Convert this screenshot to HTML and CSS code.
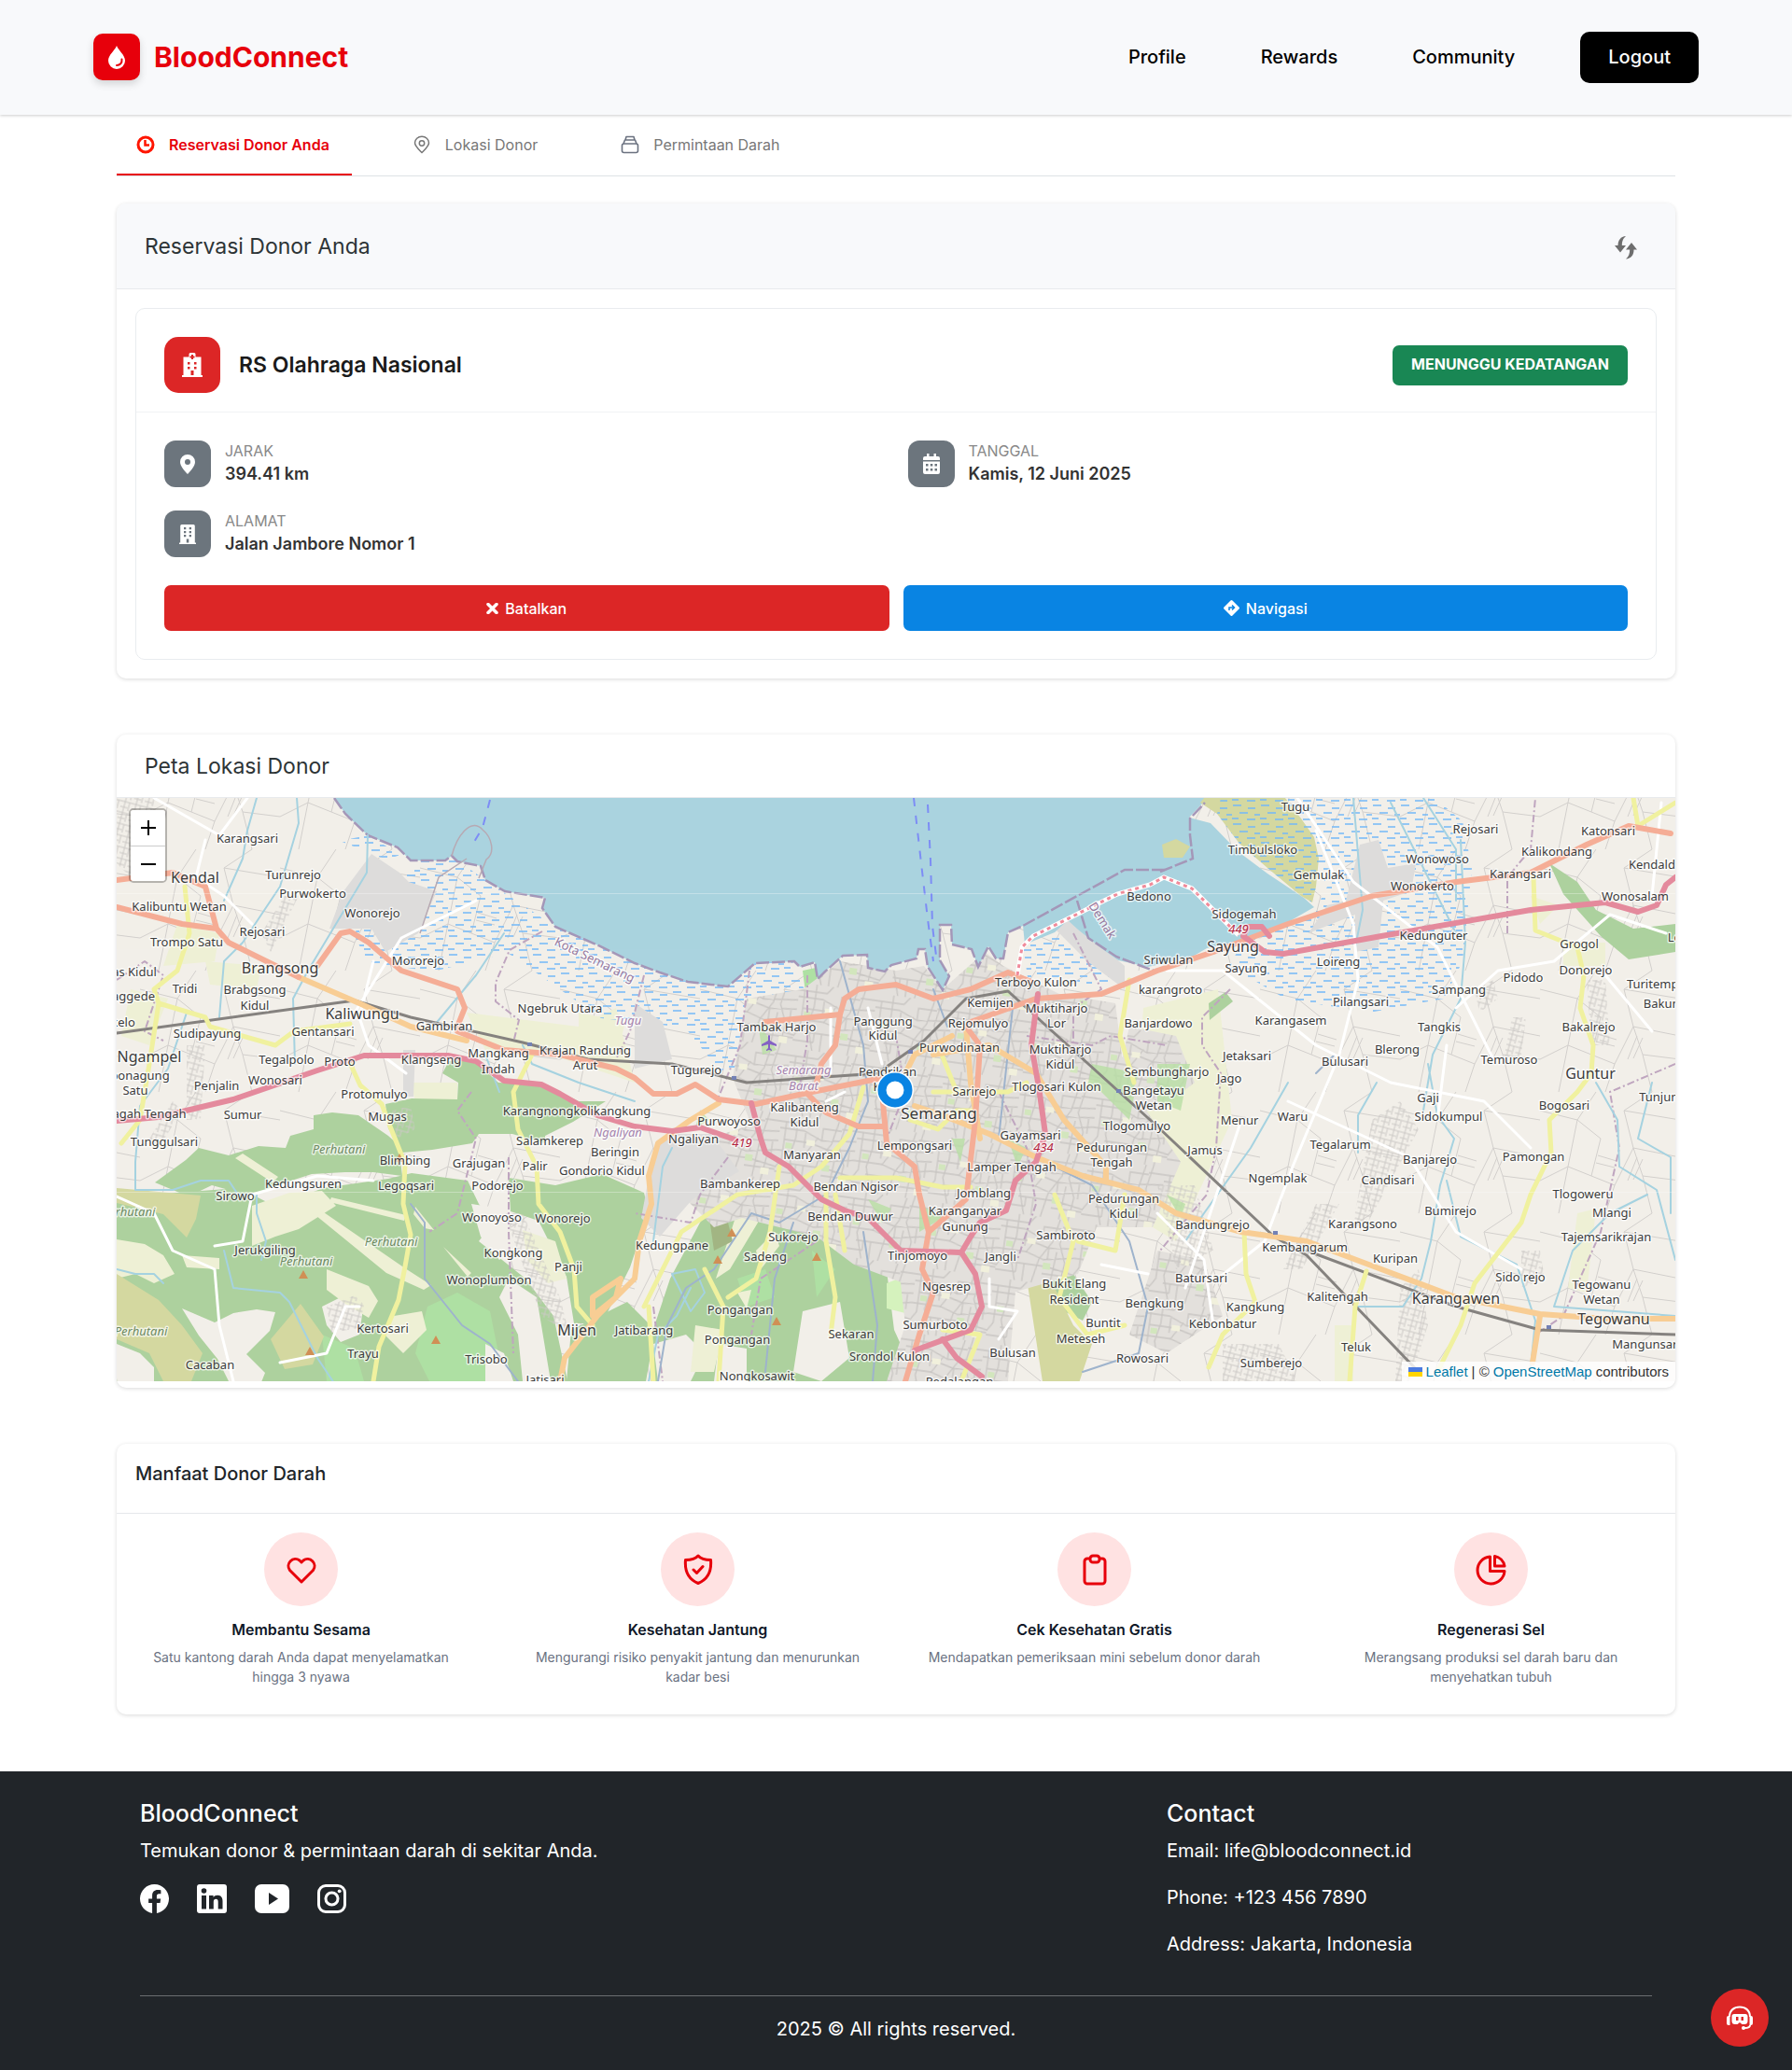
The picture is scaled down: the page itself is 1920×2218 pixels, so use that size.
FILE: index.html
```html
<!DOCTYPE html>
<html lang="id">
<head>
<meta charset="utf-8">
<meta name="viewport" content="width=device-width, initial-scale=1">
<title>BloodConnect</title>
<link rel="stylesheet" href="styles.css">
</head>
<body>
<header class="site-header">
  <a class="brand" href="#">
    <span class="brand-mark"><svg width="20" height="26" viewBox="0 0 20 26"><path fill="#fff" d="M10 1C8 6 1 11 1 17a9 9 0 0 0 18 0C19 11 12 6 10 1z"/><path d="M15.500 15.500c.5 4-2 6.500-5.500 6.500" fill="none" stroke="#e7000b" stroke-width="2" stroke-linecap="round"/></svg></span>
    <span class="brand-name">BloodConnect</span>
  </a>
  <nav class="main-nav">
    <a href="#">Profile</a>
    <a href="#">Rewards</a>
    <a href="#">Community</a>
    <button class="logout" type="button">Logout</button>
  </nav>
</header>

<main class="page">
  <nav class="tabs">
    <a class="tab active" href="#"><svg width="20" height="20" viewBox="0 0 20 20" fill="none" stroke="#ff1500" stroke-width="3"><circle cx="10" cy="10" r="8"/><path stroke-width="2.500" d="M9.500 5v5.500H14"/></svg>Reservasi Donor Anda</a>
    <a class="tab" href="#"><svg width="20" height="20" viewBox="0 0 20 20" fill="none" stroke="#777" stroke-width="1.500"><path d="M10 18.500C6 14.500 2.500 11.500 2.500 8a7.500 6.800 0 0 1 15 0c0 3.500-3.500 6.500-7.500 10.500z"/><circle cx="10" cy="8.500" r="2.700"/></svg>Lokasi Donor</a>
    <a class="tab" href="#"><svg width="20" height="20" viewBox="0 0 20 20" fill="none" stroke="#6b7280" stroke-width="1.600" stroke-linejoin="round"><rect x="1.500" y="9" width="17" height="9.500" rx="2"/><path d="M3 9l1.500-4h11L17 9M5 5l1-3.500h8L15 5"/></svg>Permintaan Darah</a>
  </nav>

  <section class="card">
    <div class="card-head tinted">
      <h2 class="card-title">Reservasi Donor Anda</h2>
      <button class="icon-button" type="button" aria-label="Muat ulang"><svg width="26" height="26" viewBox="0 0 26 26" fill="#6e6e6e"><path d="M13 1C7.500 1.500 4.500 5 4.500 11H1l6 7.500 6-7.500H8.800C8.800 6.500 10 3.500 13 1z"/><path d="M13 25.500c5.500-.5 8.500-4 8.500-10H25L19 8l-6 7.500h4.200c0 4.500-1.200 7.500-4.200 10z"/></svg></button>
    </div>
    <div class="card-body">
      <article class="booking">
        <div class="booking-head">
          <span class="place-icon"><svg width="22" height="26" viewBox="0 0 22 26"><path fill="#fff" d="M0 24h1.500V4.500h6V1.500Q7.500 0 9 0h4q1.500 0 1.500 1.500v3h6V24H22v2H0z"/><g fill="#dc2626"><rect x="10" y="2" width="2" height="5"/><rect x="8.500" y="3.500" width="5" height="2"/><rect x="6" y="10" width="2.500" height="2.500"/><rect x="13" y="10" width="2.500" height="2.500"/><rect x="6" y="15" width="2.500" height="2.500"/><rect x="13" y="15" width="2.500" height="2.500"/><rect x="9.500" y="19" width="3" height="5"/></g></svg></span>
          <h3 class="place-name">RS Olahraga Nasional</h3>
          <span class="status">MENUNGGU KEDATANGAN</span>
        </div>
        <div class="booking-body">
          <dl class="facts">
            <div class="fact">
              <span class="fact-icon"><svg width="16" height="21" viewBox="0 0 16 21"><path fill="#fff" fill-rule="evenodd" d="M8 0a8 8 0 0 1 8 8c0 4.500-5 10-8 13C5 18 0 12.500 0 8a8 8 0 0 1 8-8zm0 5a3 3 0 1 0 0 6 3 3 0 0 0 0-6z"/></svg></span>
              <div><dt>JARAK</dt><dd>394.41 km</dd></div>
            </div>
            <div class="fact">
              <span class="fact-icon"><svg width="20" height="22" viewBox="0 0 20 22"><path fill="#fff" d="M1 7V5q0-2 2-2h2V0h2.500v3h5V0H15v3h2q2 0 2 2v2zM1 8.500h18V20q0 2-2 2H3q-2 0-2-2z"/><g fill="#6c757d"><path d="M4 11h2.500v2.500H4zM8.800 11h2.500v2.500H8.800zM13.500 11H16v2.500h-2.500zM4 16h2.500v2.500H4zM8.800 16h2.500v2.500H8.800zM13.500 16H16v2.500h-2.500z"/></g></svg></span>
              <div><dt>TANGGAL</dt><dd>Kamis, 12 Juni 2025</dd></div>
            </div>
            <div class="fact">
              <span class="fact-icon"><svg width="18" height="21" viewBox="0 0 18 21"><path fill="#fff" d="M0 19.500h1.200V1.500Q1.200 0 2.700 0h12.600q1.500 0 1.500 1.500v18H18V21H0z"/><path fill="#6c757d" d="M5 3h2.300v2.300H5zM10.700 3H13v2.300h-2.300zM5 7h2.300v2.300H5zM10.700 7H13v2.300h-2.300zM5 11h2.300v2.300H5zM10.700 11H13v2.300h-2.300zM7.800 15.500h2.500v4H7.800z"/></svg></span>
              <div><dt>ALAMAT</dt><dd>Jalan Jambore Nomor 1</dd></div>
            </div>
          </dl>
          <div class="actions">
            <button class="action cancel" type="button"><svg width="13" height="12" viewBox="0 0 13 12"><path d="M2 1.500l9 9M11 1.500l-9 9" stroke="#fff" stroke-width="3.500" stroke-linecap="round"/></svg>Batalkan</button>
            <button class="action navigate" type="button"><svg width="17" height="17" viewBox="0 0 17 17"><path fill="#fff" d="M7.500.5q1-1 2 0l7 7q1 1 0 2l-7 7q-1 1-2 0l-7-7q-1-1 0-2z"/><path d="M6 11V8h5M9 5.500L11.500 8 9 10.500" fill="none" stroke="#0984e3" stroke-width="1.500"/></svg>Navigasi</button>
          </div>
        </div>
      </article>
    </div>
  </section>

  <section class="card map-card">
    <div class="card-head slim"><h2 class="card-title">Peta Lokasi Donor</h2></div>
    <div class="map">
      <svg class="map-canvas" viewBox="125 855 1670 625" preserveAspectRatio="xMidYMid slice" role="img" aria-label="Peta Semarang">
        <defs>
          <pattern id="marsh" width="30" height="20" patternUnits="userSpaceOnUse"><path d="M1 3h9M17 6h8M8 11h9M24 13h6M0 17h7M16 18h9" stroke="#74b9f7" stroke-width="1.500"/></pattern>
          <pattern id="lanes" width="150" height="130" patternUnits="userSpaceOnUse"><path d="M0 20L40 30 60 0M40 30L30 80 0 95M30 80L80 100 70 130M80 100L100 60 150 70M100 60L90 20 120 0M90 20L150 30M55 90L65 50 40 30M0 20M150 95L110 90 100 60M30 80L20 130M110 90L120 130M62 68l20 6M60 76l20 5M104 70l-10 25M110 72l-10 22" fill="none" stroke="#d2cfcc" stroke-width="1"/></pattern>
          <pattern id="blocks" width="83" height="71" patternUnits="userSpaceOnUse" patternTransform="rotate(8)"><rect width="83" height="71" fill="#e3e0dc"/><path d="M0 8h30l6-8M0 15h26l20 8 37-4M18 0v24l-4 20 8 27M6 8v40l-6 10M28 15v18M30 40l12-20M6 27h28l20 5 29-3M0 39h30l20 6 33-6M14 52h40l29 5M0 62h22M40 71l5-26 12-20 5-25M60 71l3-36M70 0l-5 26 8 20-3 25M46 23v-13h20M30 52v19M50 60h33M54 32v12M77 29v18M22 52v10M66 8h17" fill="none" stroke="#c9c6c3" stroke-width="1.300"/><path d="M50 48h8v7h-8zM8 30h7v6H8z" fill="#d2e6bd"/><path d="M30 24h9v6h-9zM68 60h9v7h-9z" fill="#f1f0dc"/></pattern>
          <pattern id="village" width="12" height="12" patternUnits="userSpaceOnUse" patternTransform="rotate(15)"><path d="M0 3h12M4 0v12M0 9h8M9 3v9" fill="none" stroke="#cbc8c5" stroke-width="1"/></pattern>
        </defs>
        <rect x="125" y="855" width="1670" height="625" fill="#f2efe9"/>
        <rect x="125" y="855" width="1670" height="625" fill="url(#lanes)"/>

        <g class="farmland">
          <path d="M190 990l45 10-5 30-55 5zM220 1030l60 5-5 25-50-5zM140 1060l40 10-20 50-30-10zM440 1160h50v20h-45zM500 1085l120 15 40-20 20 80-90-30-70-5zM620 1085l50 10-10 40-40-5zM1225 1080l80-20 15 140-60 130-50-30zM1640 960l30 10-20 20zM1675 1010h45v25h-45zM1430 1420h20v60h-20zM1690 1300l20-5-10 90-20-5z"/>
        </g>
        <g class="forest">
          <path d="M166 1267l33-24 14-13 32 8 32-10 29 2 5-13 25-7v-15l20-3 28 3 32 22 11 10 4 33-31-4-30 0-36 2-28 9-29 11-21 0-29-8-25 12z"/>
          <path d="M413 1183l28-6 49 1 1-18-17-10 7-13 25-2 28 25 50 2 36 18 29 0-35 22-30 15v8l-35-10-36 0-7 10-43 7-32 3-15-26z"/>
          <path d="M125 1283l77-6 54-4 40 20 50-20 70-10 25-6 60 8 12 25 15 20-15 20 50 40 30 40 15 70H125z"/>
          <path d="M545 1262l50 8 50-12 45 20 5 20-20 60-30 60-30 0-8-50-30-60-30-10z"/>
          <path d="M612 1425l60-30 30 30-10 55h-85z"/>
          <path d="M698 1430l20-60 40-75 30-15 20 5 20-10 40 30 60 10 20 30 10 80 25 55H700z"/>
          <path d="M1110 1270l40-10-10 40-50 20-10-20zM1090 1370l30-25 30 20 20 30-10 20-40-20zM1295 1075l18-12 8 10-25 20zM1660 925l30 20 20 30 40 20 45-5v30l-50 8-30-25-40-45z"/>
        </g>
        <g fill="#aee0a3"><path d="M458 1400l32-15 35 20 15 75h-80l-15-30zM345 1430l35 15 10 35h-40zM860 1040l14-3 5 30-15 5z"/><path d="M950 1375l25-10 15 20-20 22-20-5z" fill="#d5f2bd"/><path d="M790 1370l30-10 10 30-30 10zM870 1340l25 20-20 30z"/></g>
        <g class="open">
          <path d="M195 1402l35 15 20-10 25-4 20 3-6 20-25 25 20 20-6 15h-30l-15-30-20-25zM125 1440l25 10 15 15v15h-40zM345 1400l30-15 15 10-5 35-20 8-15-18zM545 1370l30 20 10 60 5 30h-30l-5-50-20-40zM505 1290l35 5 15 40-20 15-20-25zM520 1440l20 10 10 30h-30zM860 1405l40-10 10 60-30 25-30-10zM700 1440l35-10 20 20-15 30h-35zM770 1440l30 5 0 35h-35z"/>
        </g>
        <g class="clearing">
          <path d="M125 1328l30 5 20 12 12 20-22 10-20-10-20 5zM270 1292l40-14 35-2 15 16-40 25-25 8-25 10zM195 1345l40 3v12l-35-2zM350 1360l25 10 20 8 10 16-10 18-25-15-20-15zM422 1410l30-5 5 20-25 25-20-20zM252 1241l8-5 38 25-6 6zM338 1302l6-5 90 62 28 18-8 5-40-18zM355 1283l80 19-2 6-80-20zM445 1293l20 25-10-2-12-15zM560 1318l35 12 12 40-20 5-22-25zM475 1336l30 28-4 4zM790 1298l22-10 0 22-30 50-15 10zM745 1420l30 5-10 45h-25zM790 1385l15-3-5 20zM810 1340l20-20 5 15-20 25z"/>
        </g>
        <g class="scrub"><path d="M125 1365l45 28 25 27 22 30-12 30h-30l-15-30-35-15zM290 1435l32-38 25 35-12 30-30 5zM125 1273l90 8-5 25-10 20-25-25-50-12zM1100 1370l20-10 30 60 20 20-20 60h-30z"/><path d="M760 1305l20 5 5 20-20 10z" fill="#a2b583"/></g>

        <g class="marsh">
          <path d="M394 895l46 27 50 0 30 21 75 50 85 37 60 22 40 4 29-25 40 0 35 80 20 50-60 10-70-20-40-50-90-10-100-70-80 20-70-10-15-30 20-30 75-70-60 20-50-20z"/>
          <path d="M1096 1012l35-12 20 10 50 25-10 22-90-10zM1377 855h160l30 25 10 50-10 100-20 40-80 15-90-15-60-35 20-35 70-20 15-30z"/>
        </g>
        <g class="urban">
          <path d="M800 1070l60-10 40-30 60 10 30-5 20 25 45-40 20 15 60 30 60 10 10 80 60 90-30 70-60 0-20 50-70 20-60 60-30-60-80-30-40-30-80-20-30 10-60-60 40-30 60-20-20-50z"/>
          <path d="M960 1330l80-20 50 50-10 120h-130l20-60zM1210 1100l50 10 20 50-40 30-50 0zM1240 1340l50 10 20 60-60 40-40-20z"/>
        </g>
        <g class="hamlets"><path d="M125 855h40l10 70-30 20-20-20zM420 1190l20-5 5 25-20 10zM1240 1270l40 0 20 70-40 20zM1470 1200l30-20 20 30-60 110-10-10zM1580 1060l20-10 5 20-20 15zM1700 1050l20 0 5 70-20 0zM1410 1290l25 0-40 70-20 0zM1500 1380l20-20 10 60-20 60-15 0zM1630 1340l20 0 5 30-25 10zM160 1220l25-40 10 10-25 40zM200 1120l20 0-5 80-15 0zM1310 1440l60 0 20 40h-80zM1620 1090l15 0-5 40-20 10zM280 1000l25-40 15 0-30 60zM350 1400l30-12 10 10-5 25-30 5zM540 1300l20 0 40 90 10 40-30-20z"/></g>
        <g fill="#dddcdb"><path d="M398 915l30 20 10 10 30 10-20 45-35 20-15-25-45 0 15-40zM702 1225l20-10 40 0 30 40-50 30-35 40-20-20zM1457 905l20-5 10 30 30-5-5 30-30 10-5 50-25 5 0-40-50 20 20-30 20-5zM432 1125h13l-2 50h-11zM680 1075l30 20 10 40-40 10zM1130 995l15-10 60 50 0 25-40-30z"/></g>
        <g fill="#b8dfa4" opacity=".8"><path d="M812 1095l20 30-15 5zM985 1290l25 15-25 15zM1080 1220l20 10-10 20zM1170 1140l50 10-10 30-45-15zM1180 1170l35 5-5 25zM1240 1140l35 0-10 50-25-10zM930 1285l25 10-10 15zM1250 1280l20 10-5 15zM750 1190l10 10-15 8zM1020 1220l14 0-5 25z"/></g>

        <path class="sea" d="M358 855l12 17 24 23 32 13 14 14h37l7-5 6 6 25 5 5 15 21 12 43 7-3 11 14 20 46 20 39 19 27 10 30 10 43 5 29-25 42-2 6 6 16-5 3 18 8-8 19-17 26-1 1 14 18 4 7-7 27-7 2-10h7l3 19 16 25 7-15-10-17v-38h12l1 21 21 5 7 19 11-22 8 13h8l5-28 16-7 2 20 32-13 14-13 11 10 25 20 18 13 32 7 46-10 17-10 33-7 35-10 47-27-11-10-39-26-32-24-29-30-23-6 16-17 2-5z"/>
        <g fill="#d4d8a0"><path d="M1308 855h69l17 22 14 20 5 23-3 30-4 17-12-7-36-30-30-26-24-32-18-12 10-12zM1245 905l15-6 15 8-8 12-20 0z"/></g>
        <path class="marsh" d="M1308 855h69l17 22 14 20 5 23-3 30-4 17-12-7-36-30-30-26-24-32z"/>
        <g fill="none" stroke="#a497b8" stroke-width="2.500" stroke-dasharray="14 3"><path d="M358 855l12 17 24 23 32 13 14 14h37l7-5 6 6 25 5 5 15 21 12 43 7-3 11 14 20 46 20 39 19 27 10 30 10 43 5 29-25 42-2 6 6 16-5 3 18 8-8 19-17 26-1 1 14 18 4 7-7 27-7 2-10h7l3 19 16 25 7-15-10-17v-38h12l1 21 21 5 7 19 11-22 8 13h8l5-28 16-7 109-60h45"/><path d="M1154 965l12 40 30 20 40 15M1243 934l35-14-3-25 0-18 16-17"/></g>
        <g fill="none" stroke="#b7a9b3" stroke-width="1.500"><path d="M484 917c5-20 20-42 33-28M517 889c10 8 14 25 4 32l-8 20M450 1000l20-60 30-20"/></g>
        <g class="ferry"><path d="M979 855l8 70 7 60 6 45M994 862l3 60 2 70 5 40M525 857l-8 30-12 20"/></g>

        <g class="border-line"><path d="M581 998l-35 20-15 35 0 20 25 20-5 20M690 1045l-15 60-15 30M803 1040l-10 80-25 60M865 1045v70l-10 60M1615 1000l0-60 25-30 5-55M1318 1060l-30 30 0 30 20 30-5 80-10 50-50 60M1795 1140l-70 30 10 60-20 90-40 90-30 20M505 1170l-15 20 20 30-10 40-10 40-30 20M545 1240v80l5 130M780 1240l-30 40-10 30-60-10M1100 1110l70 10 20-10 60 10M1150 1000l30 60-30 20 0 50M960 1110l10 60-20 50M1070 1170l30 60 10 60-20 60M700 1400l10 80M875 1330l-60 40-10 60M125 1050l30-20 20 15-20 60 20 10"/></g>

        <g class="river">
          <path d="M275 855l-10 35-5 30-20 45M318 855l2 27-20 68-40 60-20 20-5 60M394 895l-1 40-63 105-16 30 2 70M540 1000l-30 45-50 60M1450 855l10 120-8 40M1490 860l40 80 30 60M1525 855l35 55 0 55M1380 1160l-40 70-50 70-20 30M1475 1160l-20 35v40M1530 1140l10 55 18 25-15 50-10 60-10 40-20 30-50 0M1710 1160l23 40 2 50 40 25 20 75M1770 1160l-15 60 35 20v60M1550 1265l15 60 60 30 20 60-5 50M1795 1410l-130-10 20-60 40-40 40-20M1565 900l5 110-5 60-30 60-10 60"/>
          <path d="M125 1360l20 5 20 0 10 10M145 1275l40 0 30-10 30 0 10 15 20 0 0 20 10 30-5 20M240 1340l10 40 50 5 10 10 30 60 20 30M520 1130l15 40M200 1085l-20 60-30 40-5 60 0 30M560 1120l10 20 50 20 60 20M720 1230l-10 20-10 80M740 1380l-15 30-20 20-10 50M720 1365l25-5 10 25-15 20z"/>
        </g>
        <g class="canal"><path d="M900 1030l25 90 5 60-20 50-25 50-50 30-30-10-20 30-20 30-30 20-20 40-10 60M1085 1080l-15 140 40 20 60 30 40 60 20 70-10 50-60 20M850 1310l-20 60-10 100M925 1320l15 100-5 60M440 1290l15 20 0 60 40 50 30 20 30 40M1430 1130l-20 20M1000 1060l15 40"/></g>

        <g class="lane-white"><path d="M165 855l70 40 30-40M220 900l-10 40 30 20 30 30M400 1030l-15 60 10 30 40 30M510 965l-80 40-50 80M125 1282l40 18 20 40 45 20 5 60 15 60M230 1335l30-5 10-50 70-20 60 5M1390 855l60 90 90 70 60 120M1250 1040l60 0 100 80 80 40 100 20 50 50M1410 890l40 100 5 60-20 80-50 120-30 80-50 40M1380 1180l130 60 50 80 70 40M1550 1120l-10 80M1330 1200l-60 180M1560 1080l45-40 60-10 60-50 60 20M1720 1045l50 60M1240 1300l50 50 10 70M1780 860l-10 100M890 1080v70M930 1080l15 60M905 1170l-20 10M1180 1355l50 10M1060 1370v30l30 5-20 30M300 1460l50-10 20-50 15 0"/></g>
        <g class="rail"><path d="M125 1107l255-35 60 18 120 27 70 18 90 5 80 20 140-10 50-35 45-45 45-8 160 145 125 118 35 20 120 125M1400 1340l160 60 90 25 145 5"/></g>

        <g class="yellow"><path d="M198 950l5 50-13 40-25 20 5 15 50 15 5 10 70 20 20-15 60-8M170 1075l-10 65-10 60-20 25M374 1137l12 26 23 20 9 24 16 40-2 43 8 33-6 34-7 36-21 50-6 37M570 1130l-20 40 5 40 20 40 2 40 23 30 15 40 3 40 17 20M1643 940l2 57 45 18 7 30-4 35 14 40-2 30-15 20-30 30 2 35-22 45-10 30-50 65-15 45-25 50M1333 1320l2 45 10 30-35 35-15 35M1464 1362l-12 38-6 80M1795 860l-40 25-5-30M690 1400l40-80 60-40 60-10 30-20 30-35 15-50M885 1270v60l10 60-5 40M780 1390l30-20 15-50 10-70M1000 1170h80l20-10M975 1200l30 10 20-20 20 0M900 1262h60l50 10h30M1130 1280l20 50-15 60 30 40 40-10M1155 1330l40 10 10-60M1215 1160l-15-50 10-60M1005 1120l20 50M905 1340l-10-60M700 1480l-5-80M1010 1425l40 5-20 50M770 1480l5-80-20-40"/></g>
        <g class="orange"><path d="M320 1047l65 28 55 25 60 15M980 1185l30 10 50 20 50 25 50 20 60 15 40 25 70 20 70 10 80 30 80 30 90 18 70 5h75M1650 1410l-8 50M1000 1130l60-10 50 30 30 50 45 50 0 15M770 1182l-30 18-35 25-10 35 3 30-13 40-5 40-40 40-35 45-5 25M1035 1100l5 60 10 60M960 1170l20-40 40-20M660 1390l-25 20 0-20 30-20z"/></g>
        <g class="trunk"><path d="M125 943l60-8 35 15 12 45 13 15 75 37M125 972l70 18 37 5M340 1035l25-35 10-2 20 12 35 30 60 20 8 20-8 20M490 1105l50 20 60 5 60 15 20 10 20 17h25l20-10 25 16 40 5 60-13 75-15M820 1095l80-8 5-17 15-10 40-5 40 15 40-10 40-18 25 10M900 1087l-5 33-15 20-5 20M1040 1095l70-25 70-5 60-25 60-20 80-30 90-30 90-15 80-10 60-30 45-20 45 8M945 1170l5 55 30 25 5 30 10 40-7 40 12 25-15 45-15 50M995 1320l40-35 10-85 5-80-15-20M865 1172l20 20 35 15 25 0"/></g>
        <g class="toll"><path d="M125 1201l45-4 80-19 90-31 50-16h90l30 6 30 21 40 4 20 10 40 23 40 12 40 5 30-4 40 14M805 1182l10 38 5 15 25 15 35 35 25 12 25 8 35 35 65 2 10-17 10-15 28-13 10-32 22-20 10-30-7-50-8-45 7-55M1030 1342l15 23 7 35-12 25-60 22M1010 1435l15 20 27 20M1360 1003l-8-10h-15l-5 10 23 17 20 2 105-19 160-28 80-8 35 10 20-7 10-22 10-8"/></g>
        <g fill="none" stroke="#fff" stroke-width="5"><path d="M1090 1045l5-30 12-12 90-45 35-10 15-8 30 12 30 30 20 20"/><path d="M1090 1045l5-30 12-12 90-45 35-10 15-8 30 12 30 30 20 20" stroke="#f08a9a" stroke-width="3" stroke-dasharray="4 4"/></g>
        <g class="peak"><path d="M423 1245l5-9 5 9zM320 1370l5-9 5 9zM327 1452l5-9 5 9zM462 1440l5-9 5 9zM779 1325l5-9 5 9zM764 1354l5-9 5 9zM870 1351l5-9 5 9zM827 1420l5-9 5 9z"/></g>
        <path fill="#8461c4" d="M823 1110q1-2 2 0v5l7 4v2l-7-2v4l2 2v1l-3-1-3 1v-1l2-2v-4l-7 2v-2l7-4z"/>
        <g fill="#7381b5"><path d="M973 1125h5v4h-5zM784 1153h5v4h-5zM1196 1167h5v4h-5zM1364 1319h5v4h-5zM1657 1420h5v4h-5zM565 1117h5v4h-5z"/></g>
        <path d="M125 957.500H1795M125 1277.500H1795" stroke="#fff" stroke-width="1" opacity=".3"/>

        <g class="labels">
          <text x="265" y="903">Karangsari</text><text x="314" y="942">Turunrejo</text><text x="335" y="962">Purwokerto</text><text x="192" y="976">Kalibuntu Wetan</text><text x="399" y="983">Wonorejo</text><text x="200" y="1014">Trompo Satu</text><text x="281" y="1003">Rejosari</text><text x="448" y="1034">Mororejo</text><text x="144" y="1046">as Kidul</text><text x="198" y="1064">Tridi</text><text x="273" y="1065">Brabgsong</text><text x="273" y="1082">Kidul</text><text x="143" y="1072">aggede</text><text x="132" y="1100">kelo</text><text x="222" y="1112">Sudipayung</text><text x="346" y="1110">Gentansari</text><text x="476" y="1104">Gambiran</text><text x="600" y="1085">Ngebruk Utara</text>
          <text x="307" y="1140">Tegalpolo</text><text x="364" y="1142">Proto</text><text x="462" y="1140">Klangseng</text><text x="534" y="1133">Mangkang</text><text x="534" y="1150">Indah</text><text x="627" y="1130">Krajan Randung</text><text x="627" y="1146">Arut</text><text x="150" y="1157">ponagung</text><text x="145" y="1173">Satu</text><text x="232" y="1168">Penjalin</text><text x="295" y="1162">Wonosari</text><text x="401" y="1177">Protomulyo</text><text x="160" y="1198">agah Tengah</text><text x="260" y="1199">Sumur</text><text x="415" y="1201">Mugas</text><text x="618" y="1195">Karangnongkolikangkung</text><text x="176" y="1228">Tunggulsari</text><text x="434" y="1248">Blimbing</text><text x="589" y="1227">Salamkerep</text><text x="659" y="1239">Beringin</text><text x="513" y="1251">Grajugan</text><text x="573" y="1254">Palir</text><text x="645" y="1259">Gondorio Kidul</text><text x="325" y="1273">Kedungsuren</text><text x="435" y="1275">Legoqsari</text><text x="533" y="1275">Podorejo</text><text x="252" y="1286">Sirowo</text><text x="527" y="1309">Wonoyoso</text><text x="603" y="1310">Wonorejo</text><text x="284" y="1344">Jerukgiling</text><text x="550" y="1347">Kongkong</text><text x="609" y="1362">Panji</text><text x="524" y="1376">Wonoplumbon</text><text x="410" y="1428">Kertosari</text><text x="690" y="1430">Jatibarang</text><text x="389" y="1455">Trayu</text><text x="521" y="1461">Trisobo</text><text x="225" y="1467">Cacaban</text><text x="584" y="1483">Jatisari</text>
          <text x="1110" y="1057">Terboyo Kulon</text><text x="1061" y="1079">Kemijen</text><text x="1132" y="1085">Muktiharjo</text><text x="1132" y="1101">Lor</text><text x="946" y="1099">Panggung</text><text x="946" y="1114">Kidul</text><text x="1048" y="1101">Rejomulyo</text><text x="832" y="1105">Tambak Harjo</text><text x="1028" y="1127">Purwodinatan</text><text x="1136" y="1129">Muktiharjo</text><text x="1136" y="1145">Kidul</text><text x="746" y="1151">Tugurejo</text><text x="951" y="1153">Pendrikan</text><text x="951" y="1169">Kidul</text><text x="1044" y="1174">Sarirejo</text><text x="1132" y="1169">Tlogosari Kulon</text><text x="862" y="1191">Kalibanteng</text><text x="862" y="1207">Kidul</text><text x="1254" y="1065">karangroto</text><text x="1241" y="1101">Banjardowo</text><text x="1250" y="1153">Sembungharjo</text><text x="1236" y="1173">Bangetayu</text><text x="1236" y="1189">Wetan</text><text x="1252" y="1033">Sriwulan</text><text x="1231" y="965">Bedono</text>
          <text x="781" y="1206">Purwoyoso</text><text x="743" y="1225">Ngaliyan</text><text x="870" y="1242">Manyaran</text><text x="980" y="1232">Lempongsari</text><text x="1104" y="1221">Gayamsari</text><text x="1218" y="1211">Tlogomulyo</text><text x="1191" y="1234">Pedurungan</text><text x="1191" y="1250">Tengah</text><text x="1084" y="1255">Lamper Tengah</text><text x="793" y="1273">Bambankerep</text><text x="917" y="1276">Bendan Ngisor</text><text x="1054" y="1283">Jomblang</text><text x="1204" y="1289">Pedurungan</text><text x="1204" y="1305">Kidul</text><text x="911" y="1308">Bendan Duwur</text><text x="1034" y="1302">Karanganyar</text><text x="1034" y="1319">Gunung</text><text x="1142" y="1328">Sambiroto</text><text x="720" y="1339">Kedungpane</text><text x="850" y="1330">Sukorejo</text><text x="820" y="1351">Sadeng</text><text x="983" y="1350">Tinjomoyo</text><text x="1072" y="1351">Jangli</text><text x="1014" y="1383">Ngesrep</text><text x="1151" y="1380">Bukit Elang</text><text x="1151" y="1397">Resident</text><text x="793" y="1408">Pongangan</text><text x="790" y="1440">Pongangan</text><text x="1002" y="1424">Sumurboto</text><text x="912" y="1434">Sekaran</text><text x="1182" y="1422">Buntit</text><text x="1158" y="1439">Meteseh</text><text x="953" y="1458">Srondol Kulon</text><text x="1085" y="1454">Bulusan</text><text x="1237" y="1401">Bengkung</text><text x="1224" y="1460">Rowosari</text><text x="811" y="1479">Nongkosawit</text><text x="1028" y="1485">Pedalangan</text>
          <text x="1388" y="869">Tugu</text><text x="1353" y="915">Timbulsloko</text><text x="1413" y="942">Gemulak</text><text x="1581" y="893">Rejosari</text><text x="1723" y="895">Katonsari</text><text x="1668" y="917">Kalikondang</text><text x="1540" y="925">Wonowoso</text><text x="1789" y="931">Kendaldoyong</text><text x="1629" y="941">Karangsari</text><text x="1524" y="954">Wonokerto</text><text x="1752" y="965">Wonosalam</text><text x="1333" y="984">Sidogemah</text><text x="1536" y="1007">Kedunguter</text><text x="1692" y="1016">Grogol</text><text x="1335" y="1042">Sayung</text><text x="1434" y="1035">Loireng</text><text x="1699" y="1044">Donorejo</text><text x="1632" y="1052">Pidodo</text><text x="1563" y="1065">Sampang</text><text x="1776" y="1059">Turitempel</text><text x="1792" y="1080">Bakung IV</text><text x="1794" y="1009">Lo</text><text x="1458" y="1078">Pilangsari</text><text x="1383" y="1098">Karangasem</text><text x="1542" y="1105">Tangkis</text><text x="1702" y="1105">Bakalrejo</text><text x="1336" y="1136">Jetaksari</text><text x="1441" y="1142">Bulusari</text><text x="1497" y="1129">Blerong</text><text x="1617" y="1140">Temuroso</text><text x="1317" y="1160">Jago</text>
          <text x="1328" y="1205">Menur</text><text x="1385" y="1201">Waru</text><text x="1530" y="1181">Gaji</text><text x="1552" y="1201">Sidokumpul</text><text x="1676" y="1189">Bogosari</text><text x="1793" y="1180">Tunjungrejo</text><text x="1291" y="1237">Jamus</text><text x="1436" y="1231">Tegalarum</text><text x="1532" y="1247">Banjarejo</text><text x="1643" y="1244">Pamongan</text><text x="1369" y="1267">Ngemplak</text><text x="1487" y="1269">Candisari</text><text x="1696" y="1284">Tlogoweru</text><text x="1727" y="1304">Mlangi</text><text x="1554" y="1302">Bumirejo</text><text x="1299" y="1317">Bandungrejo</text><text x="1460" y="1316">Karangsono</text><text x="1721" y="1330">Tajemsarikrajan</text><text x="1398" y="1341">Kembangarum</text><text x="1495" y="1353">Kuripan</text><text x="1287" y="1374">Batursari</text><text x="1629" y="1373">Sido rejo</text><text x="1716" y="1381">Tegowanu</text><text x="1716" y="1397">Wetan</text><text x="1433" y="1394">Kalitengah</text><text x="1345" y="1405">Kangkung</text><text x="1310" y="1423">Kebonbatur</text><text x="1453" y="1448">Teluk</text><text x="1764" y="1445">Mangunsari</text><text x="1362" y="1465">Sumberejo</text>
        </g>
        <g class="labels town"><text x="209" y="946">Kendal</text><text x="300" y="1043">Brangsong</text><text x="388" y="1092">Kaliwungu</text><text x="160" y="1138">Ngampel</text><text x="618" y="1431">Mijen</text><text x="1321" y="1020">Sayung</text><text x="1704" y="1156">Guntur</text><text x="1560" y="1397">Karangawen</text><text x="1729" y="1419">Tegowanu</text><text class="city" x="1006" y="1199">Semarang</text></g>
        <g class="labels wood"><text x="363" y="1236">Perhutani</text><text x="419" y="1335">Perhutani</text><text x="328" y="1356">Perhutani</text><text x="151" y="1431">Perhutani</text><text x="138" y="1303">Perhutani</text></g>
        <g class="labels district"><text x="861" y="1151">Semarang</text><text x="861" y="1168">Barat</text><text x="673" y="1098">Tugu</text><text x="662" y="1218">Ngaliyan</text></g>
        <g class="labels region"><text x="637" y="1033" transform="rotate(26 637 1029)">Kota Semarang</text><text x="1180" y="990" transform="rotate(58 1180 987)">Demak</text></g>
        <g class="labels shield"><text x="795" y="1229">419</text><text x="1118" y="1234">434</text><text x="1327" y="1000">449</text></g>
        <circle cx="959" cy="1168" r="20" fill="#fff"/><circle cx="959" cy="1168" r="14" fill="#fff" stroke="#0984e3" stroke-width="9"/>
      </svg>
      <div class="zoom"><button type="button" aria-label="Perbesar"><svg width="16" height="16" viewBox="0 0 16 16"><path d="M8 0v16M0 8h16" stroke="#000" stroke-width="2"/></svg></button><button type="button" aria-label="Perkecil"><svg width="16" height="16" viewBox="0 0 16 16"><path d="M0 8h16" stroke="#000" stroke-width="2"/></svg></button></div>
      <div class="credit"><svg width="15" height="10" viewBox="0 0 15 10"><path fill="#4c7be1" d="M0 0h15v5H0z"/><path fill="#ffd500" d="M0 5h15v5H0z"/></svg> <a href="#">Leaflet</a> | © <a href="#">OpenStreetMap</a> contributors</div>
    </div>
  </section>

  <section class="card benefits">
    <h2 class="benefits-title">Manfaat Donor Darah</h2>
    <ul class="benefit-list">
      <li class="benefit"><span class="bubble"><svg class="bicon" viewBox="0 0 34 34"><path d="M17 30L4.500 17.500A7.500 7.500 0 0 1 15 7l2 2 2-2a7.500 7.500 0 0 1 10.500 10.500z"/></svg></span><h3>Membantu Sesama</h3><p>Satu kantong darah Anda dapat menyelamatkan hingga 3 nyawa</p></li>
      <li class="benefit"><span class="bubble"><svg class="bicon" viewBox="0 0 34 34"><path d="M17 2c3 3.500 8 4.500 13.500 4.500C31.500 18 28 27 17 31.500 6 27 2.500 18 3.500 6.500 9 6.500 14 5.500 17 2zM12 17l3.500 3.500 6.500-7"/></svg></span><h3>Kesehatan Jantung</h3><p>Mengurangi risiko penyakit jantung dan menurunkan kadar besi</p></li>
      <li class="benefit"><span class="bubble"><svg class="bicon" viewBox="0 0 34 34"><path d="M12 5H9a3 3 0 0 0-3 3v21a3 3 0 0 0 3 3h16a3 3 0 0 0 3-3V8a3 3 0 0 0-3-3h-3M12 5a3 3 0 0 1 3-3h4a3 3 0 0 1 3 3v1a3 3 0 0 1-3 3h-4a3 3 0 0 1-3-3z"/></svg></span><h3>Cek Kesehatan Gratis</h3><p>Mendapatkan pemeriksaan mini sebelum donor darah</p></li>
      <li class="benefit"><span class="bubble"><svg class="bicon" viewBox="0 0 34 34"><path d="M15.500 3A14.500 14.500 0 1 0 31 18.500H15.500zM20.500 2.500V13H31A13 13 0 0 0 20.500 2.500z"/></svg></span><h3>Regenerasi Sel</h3><p>Merangsang produksi sel darah baru dan menyehatkan tubuh</p></li>
    </ul>
  </section>
</main>

<footer class="site-footer">
  <div class="footer-cols">
    <div class="footer-about">
      <h2>BloodConnect</h2>
      <p>Temukan donor &amp; permintaan darah di sekitar Anda.</p>
      <div class="social">
        <a href="#" aria-label="Facebook"><svg width="31" height="31" viewBox="0 0 16 16" fill="#fff"><path d="M16 8.049c0-4.446-3.582-8.050-8-8.050C3.580 0 0 3.603 0 8.050c0 4.017 2.926 7.347 6.750 7.951v-5.625H4.720V8.050h2.030V6.275c0-2.017 1.195-3.131 3.022-3.131.876 0 1.791.157 1.791.157v1.980h-1.009c-.993 0-1.303.621-1.303 1.258v1.510h2.218l-.354 2.326H9.250V16C13.074 15.396 16 12.066 16 8.049"/></svg></a>
        <a href="#" aria-label="LinkedIn"><svg width="32" height="31" viewBox="0 0 32 31"><rect width="32" height="31" rx="3" fill="#fff"/><g fill="#212529"><circle cx="7.500" cy="7" r="2.800"/><path d="M5 12h5v14.500H5zM13 12h4.600v2c1-1.600 2.500-2.300 4.400-2.300 3.800 0 5.500 2.300 5.500 6.500v8.300h-4.800v-7.700c0-2-.8-3.100-2.300-3.100-1.700 0-2.600 1.200-2.600 3.200v7.600H13z"/></g></svg></a>
        <a href="#" aria-label="YouTube"><svg width="37" height="31" viewBox="0 0 37 31"><rect width="37" height="31" rx="7" fill="#fff"/><path d="M15 9l10 6.500L15 22z" fill="#212529"/></svg></a>
        <a href="#" aria-label="Instagram"><svg width="31" height="31" viewBox="0 0 31 31" fill="none" stroke="#fff" stroke-width="3"><rect x="1.500" y="1.500" width="28" height="28" rx="7.500"/><circle cx="15.500" cy="15.500" r="6.500"/><circle cx="23.700" cy="7.300" r="1.900" fill="#fff" stroke="none"/></svg></a>
      </div>
    </div>
    <div class="footer-contact">
      <h2>Contact</h2>
      <p>Email: life@bloodconnect.id</p>
      <p>Phone: +123 456 7890</p>
      <p>Address: Jakarta, Indonesia</p>
    </div>
  </div>
  <p class="copyright">2025 © All rights reserved.</p>
</footer>
<button class="assistant" type="button" aria-label="Asisten"><svg width="30" height="26" viewBox="0 0 30 26"><path d="M4 12C4 5 9 1.500 15 1.500S26 5 26 12" fill="none" stroke="#fff" stroke-width="2"/><path fill="#fff" fill-rule="evenodd" d="M1 13q0-2 2-2h1.500v10H3q-2 0-2-2zM29 13q0-2-2-2h-1.500v10H27q2 0 2-2zM9 9h12q2.500 0 2.500 2.500v5Q23.500 20 20 20h-2.500l-2.500-2-2.500 2H10q-3.500 0-3.500-3.500v-5Q6.500 9 9 9zm2 3v4h2.500v-4zm5.500 0v4H19v-4z"/><path d="M26 21q0 3-6 3" fill="none" stroke="#fff" stroke-width="2"/><circle cx="19" cy="24" r="2" fill="#fff"/></svg></button>
</body>
</html>
```
FILE: styles.css
```css
* { box-sizing: border-box; }
body { margin: 0; font-family: Inter, "Liberation Sans", sans-serif; font-size: 20px; color: #212529; background: #fff; }
h2, h3, p, dl, dd, ul { margin: 0; padding: 0; font-weight: 400; }
a { color: inherit; text-decoration: none; }
button { font: inherit; border: 0; cursor: pointer; }
svg { display: block; flex: none; }

.site-header { display: flex; align-items: center; justify-content: space-between; padding: 34px 100px; background: #f8f9fb; box-shadow: 0 1px 3px rgba(0,0,0,.2); position: relative; }
.brand { display: flex; align-items: center; gap: 15px; padding-bottom: 1px; }
.brand-mark { display: flex; align-items: center; justify-content: center; width: 50px; height: 50px; border-radius: 10px; background: #e7000b; box-shadow: 0 4px 8px rgba(0,0,0,.15); }
.brand-name { font-size: 30px; font-weight: 700; color: #e7000b; }
.main-nav { display: flex; align-items: center; gap: 80px; font-weight: 500; color: #000; }
.main-nav a { padding-bottom: 2px; }
.logout { margin-left: -10px; padding: 0 30px 2px; height: 55px; border-radius: 10px; background: #000; color: #fff; font-weight: 500; }

.page { padding: 0 125px; }
.tabs { display: flex; gap: 44px; border-bottom: 1px solid #dee2e6; }
.tab { display: flex; align-items: center; gap: 15px; height: 65px; padding: 0 24px 0 21px; font-size: 16px; color: #777; border-bottom: 2px solid transparent; }
.tab.active { color: #e7000b; font-weight: 600; border-bottom-color: #e7000b; }

.card { margin-top: 29px; border-radius: 10px; background: #fff; box-shadow: 0 1px 4px rgba(0,0,0,.15); overflow: hidden; }
.card + .card { margin-top: 60px; }
.card-head { display: flex; align-items: center; justify-content: space-between; height: 92px; padding: 0 40px 0 30px; border-bottom: 1px solid #e8eaed; }
.tinted { background: #f8f9fb; }
.slim { height: 68px; }
.card-title { font-size: 23px; line-height: 30px; color: #2d3436; }
.icon-button { padding: 3px 0 0; background: none; }
.card-body { padding: 20px; }
.booking { border: 1px solid #e9ecef; border-radius: 10px; }
.booking-head { display: flex; align-items: center; gap: 20px; padding: 30px 30px 20px; border-bottom: 1px solid #f1f3f5; }
.place-icon { display: flex; align-items: center; justify-content: center; width: 60px; height: 60px; border-radius: 15px; background: #dc2626; }
.place-name { flex: 1; font-size: 23px; font-weight: 600; color: #1a1a1a; }
.status { padding: 0 20px; height: 43px; line-height: 41px; border-radius: 7px; background: #198754; color: #fff; font-size: 16px; font-weight: 700; }
.booking-body { padding: 30px; }
.facts { display: grid; grid-template-columns: 1fr 1fr; gap: 25px 25px; }
.fact { display: flex; align-items: center; gap: 15px; }
.fact-icon { display: flex; align-items: center; justify-content: center; width: 50px; height: 50px; border-radius: 12px; background: #6c757d; }
.fact dt { font-size: 16px; line-height: 22px; color: #888; }
.fact dd { font-size: 18px; line-height: 28px; font-weight: 600; color: #333; }
.actions { display: grid; grid-template-columns: 1fr 1fr; gap: 15px; margin-top: 30px; }
.action { display: flex; align-items: center; justify-content: center; gap: 7px; height: 49px; border-radius: 7px; color: #fff; font-size: 16px; font-weight: 500; }
.cancel { background: #dc2626; }
.navigate { background: #0984e3; }

.map-card { padding-bottom: 7px; }
.map { position: relative; }
.map-canvas { width: 100%; height: 625px; }
.farmland { fill: #eef0d5; }
.forest { fill: #add19e; }
.open { fill: #f2efe9; }
.clearing { fill: #eef0d5; }
.scrub { fill: #d4d8a0; }
.marsh { fill: url(#marsh); }
.urban { fill: url(#blocks); }
.hamlets { fill: url(#village); }
.sea { fill: #aad3df; }
.river, .canal, .lane-white, .rail, .yellow, .orange, .trunk, .toll, .ferry, .border-line { fill: none; stroke-linejoin: round; stroke-linecap: round; }
.river { stroke: #a5d2e0; stroke-width: 2px; }
.canal { stroke: #9eb3cc; stroke-width: 2px; }
.lane-white { stroke: #fff; stroke-width: 3px; }
.rail { stroke: #85827f; stroke-width: 3px; }
.yellow { stroke: #f0f19f; stroke-width: 5px; }
.orange { stroke: #f8cd94; stroke-width: 6px; }
.trunk { stroke: #f5ad96; stroke-width: 6px; }
.toll { stroke: #e48a9d; stroke-width: 6px; }
.ferry { stroke: #7d8df5; stroke-width: 2px; stroke-dasharray: 9px 10px; stroke-linecap: butt; }
.border-line { stroke: #bfa5bf; stroke-width: 2px; stroke-dasharray: 8px 3px 2px 3px; stroke-linecap: butt; }
.peak { fill: #d08f55; }
.labels { font-family: "Noto Sans", sans-serif; font-size: 13px; text-anchor: middle; fill: #3c3c3c; stroke: rgba(255,255,255,.7); stroke-width: 3px; paint-order: stroke; stroke-linejoin: round; }
.town { font-size: 16px; }
.city { font-size: 17px; }
.wood { fill: #6d8a62; font-style: italic; }
.district { fill: #a583ad; font-style: italic; }
.region { fill: #96789e; }
.shield { fill: #b3233f; font-style: italic; }
.zoom { position: absolute; top: 11px; left: 13px; border: 2px solid rgba(0,0,0,.25); border-radius: 5px; overflow: hidden; }
.zoom button { display: flex; align-items: center; justify-content: center; width: 37px; height: 38px; padding: 0; background: #fff; }
.zoom button + button { border-top: 1px solid #ccc; }
.credit { position: absolute; right: 0; bottom: 0; display: flex; align-items: center; gap: 4px; padding: 0 7px; height: 21px; background: rgba(255,255,255,.8); font: 15px/21px "Liberation Sans", sans-serif; color: #333; white-space: nowrap; }
.credit a { color: #0078a8; }

.benefits-title { height: 75px; padding: 19px 20px; font-size: 20px; line-height: 26px; font-weight: 500; color: #212529; border-bottom: 1px solid #e5e7eb; }
.benefit-list { display: grid; grid-template-columns: repeat(4, 1fr); gap: 30px; padding: 20px 0 30px; list-style: none; }
.benefit { padding: 0 18px; text-align: center; }
.bubble { display: flex; align-items: center; justify-content: center; width: 79px; height: 79px; margin: 0 auto 13px; border-radius: 50%; background: #ffe2e2; }
.bicon { width: 34px; height: 34px; fill: none; stroke: #e7000b; stroke-width: 3px; stroke-linejoin: round; stroke-linecap: round; }
.benefit h3 { font-size: 16px; line-height: 24px; font-weight: 600; color: #101828; }
.benefit p { margin-top: 7px; font-size: 14px; line-height: 21px; color: #6a7282; }

.site-footer { margin-top: 61px; padding: 30px 150px 32px; background: #212529; color: #fff; }
.footer-cols { display: flex; justify-content: space-between; padding-bottom: 40px; border-bottom: 1px solid #6b6e71; }
.footer-cols h2 { font-size: 25px; line-height: 30px; font-weight: 500; margin-bottom: 10px; }
.footer-cols p { line-height: 30px; }
.footer-contact { flex: 0 0 520px; }
.footer-contact p + p { margin-top: 20px; }
.social { display: flex; gap: 30px; margin-top: 21px; }
.copyright { margin-top: 20px; line-height: 30px; text-align: center; }
.assistant { position: fixed; right: 25px; bottom: 25px; display: flex; align-items: center; justify-content: center; width: 62px; height: 62px; padding: 0; border-radius: 50%; background: #dc2626; }
```
